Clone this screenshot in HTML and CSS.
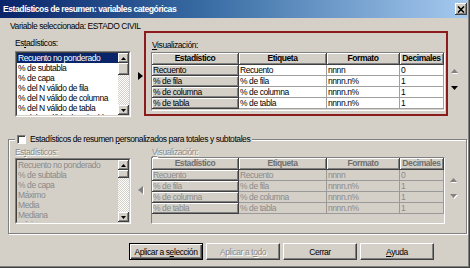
FILE: index.html
```html
<!DOCTYPE html>
<html lang="es">
<head>
<meta charset="utf-8">
<title>Estadísticos de resumen</title>
<link rel="stylesheet" href="styles.css">
</head>
<body>
<div class="window">
  <div class="titlebar">
    <span class="title">Estadísticos de resumen: variables categóricas</span>
    <span class="close"><svg width="8" height="7" viewBox="0 0 8 7"><path d="M1 0.5 L7 6.5 M7 0.5 L1 6.5" stroke="#000" stroke-width="1.6" fill="none"/></svg></span>
  </div>

  <div class="varline">Variable seleccionada: ESTADO CIVIL</div>

  <div class="top">
    <div class="leftcol">
      <div class="label lbl-top">Es<u>t</u>adísticos:</div>
      <div class="listbox">
        <div class="listin">
          <div class="items">
            <div class="item sel">Recuento no ponderado</div>
            <div class="item">% de subtabla</div>
            <div class="item">% de capa</div>
            <div class="item">% del N válido de fila</div>
            <div class="item">% del N válido de columna</div>
            <div class="item">% del N válido de tabla</div>
            <div class="item">% del N válido de subtabla</div>
          </div>
          <div class="vscroll">
            <div class="sbtn"><svg width="5" height="3" viewBox="0 0 5 3"><polygon points="0,3 2.5,0 5,3" fill="#000"/></svg></div>
            <div class="thumb"></div>
            <div class="track"></div>
            <div class="sbtn"><svg width="5" height="3" viewBox="0 0 5 3"><polygon points="0,0 5,0 2.5,3" fill="#000"/></svg></div>
          </div>
        </div>
      </div>
    </div>
    <div class="arrowcol">
      <svg width="5" height="8" viewBox="0 0 5 8"><polygon points="0,0 5,4 0,8" fill="#000"/></svg>
    </div>
    <div class="redbox">
      <div class="label lbl-vis"><u>V</u>isualización:</div>
      <div class="gridbox gb-top">
        <table class="grid">
          <colgroup><col class="c1"><col class="c2"><col class="c3"><col class="c4"></colgroup>
          <thead><tr><th>Estadístico</th><th>Etiqueta</th><th>Formato</th><th>Decimales</th></tr></thead>
          <tbody>
            <tr><td class="rh">Recuento</td><td>Recuento</td><td>nnnn</td><td>0</td></tr>
            <tr><td class="rh">% de fila</td><td>% de fila</td><td>nnnn.n%</td><td>1</td></tr>
            <tr><td class="rh">% de columna</td><td>% de columna</td><td>nnnn.n%</td><td>1</td></tr>
            <tr><td class="rh">% de tabla</td><td>% de tabla</td><td>nnnn.n%</td><td>1</td></tr>
          </tbody>
        </table>
      </div>
    </div>
    <div class="updown ud-top">
      <svg class="up" width="8" height="5" viewBox="0 0 8 5"><polygon points="1,5 4,1 7,5" fill="#fff"/><polygon points="0,4 3.5,0 7,4" fill="#808080"/></svg>
      <svg class="down" width="8" height="5" viewBox="0 0 8 5"><polygon points="0,0 7,0 3.5,4" fill="#000"/></svg>
    </div>
  </div>

  <fieldset class="group">
    <legend><span class="legend-in"><span class="cb"></span><span>Estadísticos de resumen <u>p</u>ersonalizados para totales y subtotales</span></span></legend>
    <div class="lower">
      <div class="leftcol">
        <div class="label dis lbl-low">Es<u>t</u>adísticos:</div>
        <div class="listbox lb-low">
          <div class="listin disabled">
            <div class="items">
              <div class="item">Recuento no ponderado</div>
              <div class="item">% de subtabla</div>
              <div class="item">% de capa</div>
              <div class="item">Máximo</div>
              <div class="item">Media</div>
              <div class="item">Mediana</div>
              <div class="item">Mínimo</div>
            </div>
            <div class="vscroll">
              <div class="sbtn"><svg width="5" height="3" viewBox="0 0 5 3"><polygon points="0,3 2.5,0 5,3" fill="#000"/></svg></div>
              <div class="thumb thumb-low"></div>
              <div class="track"></div>
              <div class="sbtn"><svg width="5" height="3" viewBox="0 0 5 3"><polygon points="0,0 5,0 2.5,3" fill="#000"/></svg></div>
            </div>
          </div>
        </div>
      </div>
      <div class="arrowcol arrow-low">
        <svg width="6" height="9" viewBox="0 0 6 9"><polygon points="6,1 1,5 6,9" fill="#fff"/><polygon points="5,0 0,4 5,8" fill="#808080"/></svg>
      </div>
      <div class="panel">
        <div class="label dis lbl-vis2"><u>V</u>isualización:</div>
        <div class="gridbox gb-low">
          <table class="grid dis">
            <colgroup><col class="c1"><col class="c2"><col class="c3"><col class="c4"></colgroup>
            <thead><tr><th>Estadístico</th><th>Etiqueta</th><th>Formato</th><th>Decimales</th></tr></thead>
            <tbody>
              <tr><td class="rh">Recuento</td><td>Recuento</td><td>nnnn</td><td>0</td></tr>
              <tr><td class="rh">% de fila</td><td>% de fila</td><td>nnnn.n%</td><td>1</td></tr>
              <tr><td class="rh">% de columna</td><td>% de columna</td><td>nnnn.n%</td><td>1</td></tr>
              <tr><td class="rh">% de tabla</td><td>% de tabla</td><td>nnnn.n%</td><td>1</td></tr>
            </tbody>
          </table>
        </div>
      </div>
      <div class="updown ud-low">
        <svg class="up" width="8" height="5" viewBox="0 0 8 5"><polygon points="1,5 4,1 7,5" fill="#fff"/><polygon points="0,4 3.5,0 7,4" fill="#808080"/></svg>
        <svg class="down" width="8" height="5" viewBox="0 0 8 5"><polygon points="1,1 8,1 4.5,5" fill="#fff"/><polygon points="0,0 7,0 3.5,4" fill="#808080"/></svg>
      </div>
    </div>
  </fieldset>

  <div class="buttons">
    <button class="btn default">Aplicar a s<u>e</u>lección</button>
    <button class="btn disabled-btn">Aplicar a t<u>o</u>do</button>
    <button class="btn">Cerrar</button>
    <button class="btn"><u>A</u>yuda</button>
  </div>
</div>
</body>
</html>
```

FILE: styles.css
```css
* { box-sizing: border-box; }

html, body {
  margin: 0;
  padding: 0;
}

body {
  width: 470px;
  height: 268px;
  overflow: hidden;
  background: #d4d0c8;
  font-family: "Liberation Sans", Arial, sans-serif;
  font-size: 8.5px;
  letter-spacing: -0.42px;
  color: #000;
}

.window {
  width: 470px;
  height: 268px;
  background: #d4d0c8;
  border-right: 1px solid #404040;
  border-bottom: 1px solid #404040;
  box-shadow: inset -1px -1px 0 #808080;
  padding: 0 1px 1px 0;
}

/* Title bar */
.titlebar {
  height: 18px;
  display: flex;
  align-items: center;
  padding: 0 1px 0 3px;
  background: linear-gradient(90deg, #0a246a 0%, #3a6ea5 45%, #a6caf0 100%);
}

.title {
  flex: 1;
  color: #fff;
  font-weight: bold;
  font-size: 8.6px;
  letter-spacing: -0.45px;
  line-height: 17px;
  white-space: nowrap;
}

.close {
  width: 12px;
  height: 12px;
  background: #d4d0c8;
  display: flex;
  align-items: center;
  justify-content: center;
  box-shadow: inset -1px -1px 0 #404040, inset 1px 1px 0 #fff, inset -2px -2px 0 #808080;
}

/* Selected variable line */
.varline {
  margin-top: 4px;
  height: 9px;
  line-height: 9px;
  padding-left: 10px;
  white-space: nowrap;
}

/* Labels */
.label {
  height: 10px;
  line-height: 10px;
  white-space: nowrap;
}

.label.dis {
  color: #8a8a8a;
  text-shadow: 1px 1px 0 #fff;
}

.lbl-top { margin-top: 7px; }
.lbl-vis { margin-top: 7px; padding-left: 1px; }
.lbl-low { margin-top: 2px; }
.lbl-vis2 { margin-top: 2px; padding-left: 1px; }

/* Upper row */
.top {
  display: flex;
  padding-left: 15px;
  height: 86px;
}

.leftcol {
  width: 116px;
  flex: none;
}

.arrowcol {
  width: 13px;
  flex: none;
  display: flex;
  align-items: center;
  padding: 4px 0 0 7px;
}

/* Listbox */
.listbox {
  margin-top: 3px;
  width: 116px;
  height: 66px;
  border: 1px solid;
  border-color: #808080 #fff #fff #808080;
}

.lb-low { margin-top: 1px; }

.listin {
  height: 100%;
  display: flex;
  background: #fff;
  border: 1px solid;
  border-color: #404040 #d4d0c8 #d4d0c8 #404040;
}

.listin.disabled {
  background: #d4d0c8;
  color: #8a8a8a;
}

.items {
  flex: 1;
  overflow: hidden;
}

.item {
  height: 10px;
  line-height: 10px;
  padding-left: 1px;
  white-space: nowrap;
}

.item.sel {
  background: #0a246a;
  color: #fff;
}

.vscroll {
  width: 11px;
  flex: none;
  display: flex;
  flex-direction: column;
}

.sbtn, .thumb {
  background: #d4d0c8;
  box-shadow: inset -1px -1px 0 #404040, inset 1px 1px 0 #fff, inset -2px -2px 0 #808080;
}

.sbtn {
  height: 10px;
  display: flex;
  align-items: center;
  justify-content: center;
}

.thumb { height: 12px; }
.thumb-low { height: 8px; }

.track {
  flex: 1;
  background: repeating-conic-gradient(#ffffff 0 25%, #d4d0c8 0 50%) 0 0 / 2px 2px;
}

/* Red highlighted panel */
.redbox {
  width: 304px;
  height: 85px;
  flex: none;
  border: 2px solid #8e1b1b;
  padding-left: 5px;
}

/* Grids */
.gridbox {
  width: 294px;
  border: 1px solid;
  border-color: #808080 #fff #fff #808080;
  background: #d4d0c8;
  overflow: hidden;
}

.gb-top {
  margin-top: 2px;
  height: 59px;
}

.gb-low {
  margin-top: 0;
  height: 67px;
}

.grid {
  border-collapse: separate;
  border-spacing: 0;
  table-layout: fixed;
  width: 292px;
}

.c1 { width: 87px; }
.c2 { width: 88px; }
.c3 { width: 73px; }
.c4 { width: 44px; }

.grid th {
  padding: 0;
  line-height: 11px;
  font-weight: bold;
  text-align: center;
  white-space: nowrap;
  overflow: hidden;
  background: #d4d0c8;
  border-right: 1px solid #404040;
  border-bottom: 1px solid #404040;
  box-shadow: inset 1px 1px 0 #fff, inset -1px -1px 0 #808080;
}

.grid td {
  padding: 0 0 0 1px;
  line-height: 10px;
  white-space: nowrap;
  overflow: hidden;
  background: #fff;
  border-right: 1px solid #a0a0a0;
  border-bottom: 1px solid #a0a0a0;
}

.grid td.rh {
  background: #d4d0c8;
  border-right-color: #404040;
  border-bottom-color: #404040;
  box-shadow: inset 1px 1px 0 #fff, inset -1px -1px 0 #808080;
}

.grid.dis th { color: #6e6e6e; }

.grid.dis td {
  background: #d4d0c8;
  color: #8a8a8a;
  border-right-color: #9a9a9a;
  border-bottom-color: #9a9a9a;
}

.grid.dis td.rh {
  border-right-color: #404040;
  border-bottom-color: #404040;
}

/* Up / down move arrows */
.updown {
  display: flex;
  flex-direction: column;
  flex: none;
}

.updown svg { display: block; }

.ud-top {
  padding: 38px 0 0 3px;
  gap: 12px;
}

.ud-low {
  padding: 33px 0 0 5px;
  gap: 11px;
}

/* Group box */
.group {
  margin: 17px 0 0 8px;
  width: 459px;
  height: 100px;
  min-width: 0;
  padding: 0 0 0 6px;
  border: 1px solid #808080;
  box-shadow: 1px 1px 0 #fff, inset 1px 1px 0 #fff;
}

.group legend {
  padding: 0 2px;
  margin: 0;
  line-height: 11px;
  height: 11px;
  background: #d4d0c8;
}

.legend-in {
  display: flex;
  align-items: center;
  gap: 4px;
  white-space: nowrap;
}

.cb {
  width: 9px;
  height: 9px;
  flex: none;
  background: #fff;
  border: 1px solid;
  border-color: #808080 #fff #fff #808080;
  box-shadow: inset 1px 1px 0 #404040;
}

.lower {
  display: flex;
}

.arrow-low {
  width: 20px;
  align-items: flex-start;
  padding: 41px 0 0 7px;
}

.panel {
  width: 294px;
  flex: none;
}

/* Buttons */
.buttons {
  display: flex;
  justify-content: flex-end;
  gap: 3px;
  margin-top: 9px;
  padding-right: 34px;
}

.btn {
  width: 74px;
  height: 17px;
  padding: 0;
  font: inherit;
  letter-spacing: inherit;
  color: #000;
  background: #d4d0c8;
  border: 1px solid;
  border-color: #fff #404040 #404040 #fff;
  box-shadow: inset -1px -1px 0 #808080;
  white-space: nowrap;
}

.btn.default {
  border: 1px solid #000;
  box-shadow: inset 1px 1px 0 #fff, inset -1px -1px 0 #404040, inset -2px -2px 0 #808080;
}

.btn.disabled-btn {
  color: #8a8a8a;
  text-shadow: 1px 1px 0 #fff;
}
```
